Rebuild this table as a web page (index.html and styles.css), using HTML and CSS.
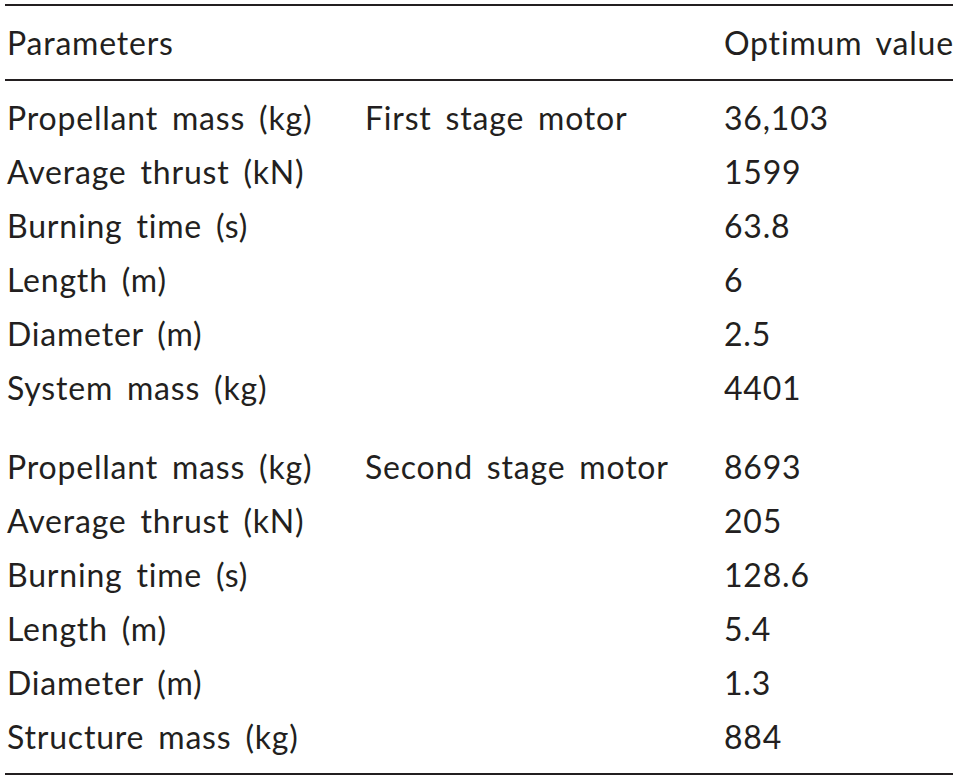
FILE: index.html
```html
<!DOCTYPE html>
<html>
<head>
<meta charset="utf-8">
<link rel="stylesheet" href="styles.css">
</head>
<body>
<div class="tbl">
  <div class="row head">
    <div>Parameters</div><div></div><div>Optimum value</div>
  </div>
  <div class="body">
    <div class="group">
      <div class="row"><div>Propellant mass (kg)</div><div>First stage motor</div><div>36,103</div></div>
      <div class="row"><div>Average thrust (kN)</div><div></div><div>1599</div></div>
      <div class="row"><div>Burning time (s)</div><div></div><div>63.8</div></div>
      <div class="row"><div>Length (m)</div><div></div><div>6</div></div>
      <div class="row"><div>Diameter (m)</div><div></div><div>2.5</div></div>
      <div class="row"><div>System mass (kg)</div><div></div><div>4401</div></div>
    </div>
    <div class="group">
      <div class="row"><div>Propellant mass (kg)</div><div>Second stage motor</div><div>8693</div></div>
      <div class="row"><div>Average thrust (kN)</div><div></div><div>205</div></div>
      <div class="row"><div>Burning time (s)</div><div></div><div>128.6</div></div>
      <div class="row"><div>Length (m)</div><div></div><div>5.4</div></div>
      <div class="row"><div>Diameter (m)</div><div></div><div>1.3</div></div>
      <div class="row"><div>Structure mass (kg)</div><div></div><div>884</div></div>
    </div>
  </div>
</div>
</body>
</html>
```
FILE: styles.css
```css
html, body {
  margin: 0;
  padding: 0;
  background: #ffffff;
}
body {
  font-family: Lato, "Open Sans", sans-serif;
  font-size: 32px;
  color: #231f20;
  letter-spacing: 0.8px;
  word-spacing: 5px;
}
.tbl {
  margin: 4px 0 0 5px;
  width: 948px;
  border-top: 2px solid #231f20;
  border-bottom: 2px solid #231f20;
}
.row {
  display: grid;
  grid-template-columns: 358px 359px 1fr;
  line-height: 54px;
  padding-left: 2px;
  white-space: nowrap;
}
.head {
  padding-top: 10px;
  padding-bottom: 9px;
  border-bottom: 2px solid #231f20;
}
.body {
  padding-top: 10px;
  padding-bottom: 9px;
  display: flex;
  flex-direction: column;
  gap: 25px;
}
```
